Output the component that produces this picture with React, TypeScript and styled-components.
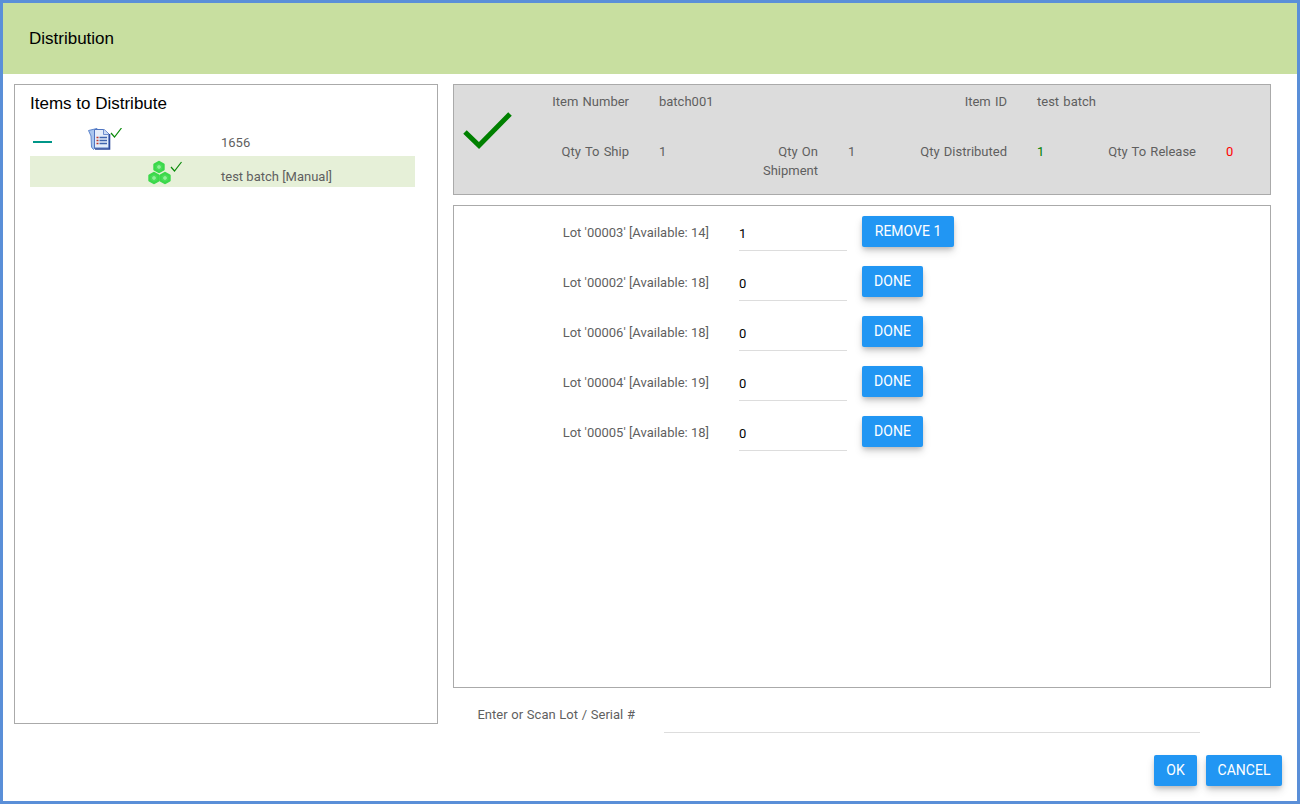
import styled, { createGlobalStyle } from "styled-components";

const GlobalStyle = createGlobalStyle`
  html, body {
    margin: 0;
    padding: 0;
    background: #fff;
  }
  * {
    box-sizing: border-box;
  }
`;

const Frame = styled.div`
  width: 1300px;
  height: 804px;
  border: 3px solid #5a8fd8;
  background: #fff;
  font-family: Roboto, "Liberation Sans", sans-serif;
  font-size: 13px;
  color: #5f5f5f;
  overflow: hidden;
`;

const Header = styled.div`
  height: 71px;
  background: #c8dfa0;
  display: flex;
  align-items: center;
  padding-left: 26px;
  font-family: "Liberation Sans", Arial, sans-serif;
  font-size: 17px;
  color: #000;
`;

const Main = styled.div`
  display: flex;
  gap: 15px;
  padding: 10px 0 0 11px;
  height: 659px;
`;

const TreePanel = styled.div`
  width: 424px;
  height: 640px;
  border: 1px solid #aaa;
  padding: 9px 22px 0 15px;
`;

const PanelTitle = styled.div`
  font-family: "Liberation Sans", Arial, sans-serif;
  font-size: 17px;
  line-height: 20px;
  color: #000;
`;

const TreeRows = styled.div`
  margin-top: 11px;
`;

const TreeRow = styled.div<{ $selected?: boolean; $indent: number }>`
  display: grid;
  grid-template-columns: ${({ $indent }) => $indent}px ${({ $indent }) => 191 - $indent}px 1fr;
  height: 31px;
  background: ${({ $selected }) => ($selected ? "#e6f0d8" : "transparent")};
`;

const Collapse = styled.div`
  width: 19px;
  height: 2px;
  margin: 16px 0 0 3px;
  background: #009688;
`;

const TreeIcon = styled.svg<{ $top: number }>`
  display: block;
  margin-top: ${({ $top }) => $top}px;
`;

const TreeText = styled.div<{ $top: number }>`
  padding-top: ${({ $top }) => $top}px;
  line-height: 14px;
  white-space: nowrap;
`;

const RightColumn = styled.div`
  width: 818px;
  display: flex;
  flex-direction: column;
  gap: 10px;
`;

const Summary = styled.div`
  height: 111px;
  background: #dcdcdc;
  border: 1px solid #aaa;
  padding-top: 7px;
  display: grid;
  grid-template-columns: 86px repeat(4, 90px 29px 70px);
  grid-template-rows: 50px auto;
  line-height: 19px;
  word-spacing: 1px;
`;

const BigCheck = styled.svg`
  grid-row: 1 / span 2;
  grid-column: 1;
  margin: 18px 0 0 8px;
`;

const Label = styled.div<{ $col: number }>`
  grid-column: ${({ $col }) => $col * 3 - 1};
  text-align: right;
  padding-right: 1px;
`;

const Value = styled.div<{ $col: number; $color?: string }>`
  grid-column: ${({ $col }) => $col * 3 + 1};
  color: ${({ $color }) => $color ?? "#5f5f5f"};
`;

const LotPanel = styled.div`
  height: 483px;
  border: 1px solid #aaa;
  padding-top: 10px;
  display: flex;
  flex-direction: column;
  gap: 19px;
`;

const LotRow = styled.div`
  display: flex;
  height: 31px;
`;

const LotLabel = styled.div`
  width: 255px;
  text-align: right;
  line-height: 33px;
  white-space: nowrap;
`;

const LotInput = styled.input`
  width: 108px;
  height: 35px;
  margin: 0 15px 0 30px;
  padding: 1px 0 0;
  border: 0;
  border-bottom: 1px solid #ddd;
  outline: none;
  background: transparent;
  font-family: Roboto, sans-serif;
  font-size: 13px;
  color: #000;
`;

const Button = styled.button<{ $width: number }>`
  width: ${({ $width }) => $width}px;
  height: 31px;
  padding: 0 0 2px;
  border: 0;
  border-radius: 2px;
  background: #2196f3;
  color: #fff;
  font-family: Roboto, sans-serif;
  font-size: 14px;
  white-space: nowrap;
  box-shadow: 0 3px 5px -1px rgba(0, 0, 0, 0.2), 0 5px 8px 0 rgba(0, 0, 0, 0.12);
`;

const ScanRow = styled.div`
  display: flex;
  height: 35px;
`;

const ScanLabel = styled.div`
  width: 182px;
  text-align: right;
  line-height: 33px;
  white-space: nowrap;
  word-spacing: 0.5px;
`;

const ScanInput = styled.input`
  width: 536px;
  height: 35px;
  margin-left: 29px;
  border: 0;
  border-bottom: 1px solid #ddd;
  outline: none;
  background: transparent;
`;

const Footer = styled.div`
  display: flex;
  justify-content: flex-end;
  gap: 9px;
  padding: 22px 15px 0 0;
`;

const lots = [
  { lot: "00003", available: 14, qty: "1", action: "REMOVE 1", width: 92 },
  { lot: "00002", available: 18, qty: "0", action: "DONE", width: 61 },
  { lot: "00006", available: 18, qty: "0", action: "DONE", width: 61 },
  { lot: "00004", available: 19, qty: "0", action: "DONE", width: 61 },
  { lot: "00005", available: 18, qty: "0", action: "DONE", width: 61 },
];

const SmallCheck = ({ x, y }: { x: number; y: number }) => (
  <path
    d={`M${x} ${y + 5}l3.500 4 7-9`}
    fill="none"
    stroke="#0a8a0a"
    strokeWidth="1.2"
  />
);

const ShipmentIcon = () => (
  <TreeIcon $top={3} width="36" height="24" viewBox="0 0 36 24">
    <path d="M0.500 2.500 9 0.500V18L5.500 21.500 3.500 19 3 8z" fill="#a9c6ee" stroke="#5f86cc" />
    <path d="M6.500 1.500H16L21 6V20H6.500z" fill="#e4edfa" stroke="#4f74c0" />
    <path d="M7 21H21.500V6" fill="none" stroke="#2c4a9c" strokeWidth="1.600" />
    <path d="M15.500 1.500V6.500H21" fill="#cddcf4" stroke="#6f8fd0" />
    <path d="M8.500 9.500h2M8.500 12.500h2M8.500 15.500h2" stroke="#c0392b" strokeWidth="1.400" />
    <path d="M11.500 9.500h7.500M11.500 12.500h7.500M11.500 15.500h7.500" stroke="#3f64ad" strokeWidth="1.400" />
    <SmallCheck x={23} y={0} />
  </TreeIcon>
);

const Hex = ({ x, y }: { x: number; y: number }) => (
  <g transform={`translate(${x} ${y})`}>
    <path
      d="M0-5 4.500-2.500v5L0 5-4.500 2.500v-5z"
      fill="#4be35a"
      stroke="#3bd84b"
      strokeWidth="2.400"
      strokeLinejoin="round"
    />
    <path d="M0-2.500 2.200-1.200v2.400L0 2.500-2.200 1.200v-2.400z" fill="#8ff297" stroke="#35c544" strokeWidth=".5" />
  </g>
);

const BatchIcon = () => (
  <TreeIcon $top={3} width="36" height="26" viewBox="0 0 36 26">
    <Hex x={11} y={8} />
    <Hex x={6} y={19} />
    <Hex x={17} y={19} />
    <SmallCheck x={23} y={3} />
  </TreeIcon>
);

export default function App() {
  return (
    <Frame>
      <GlobalStyle />
      <Header>Distribution</Header>
      <Main>
        <TreePanel>
          <PanelTitle>Items to Distribute</PanelTitle>
          <TreeRows>
            <TreeRow $indent={58}>
              <Collapse />
              <div>
                <ShipmentIcon />
              </div>
              <TreeText $top={11}>1656</TreeText>
            </TreeRow>
            <TreeRow $indent={118} $selected>
              <div />
              <div>
                <BatchIcon />
              </div>
              <TreeText $top={14}>test batch [Manual]</TreeText>
            </TreeRow>
          </TreeRows>
        </TreePanel>
        <RightColumn>
          <Summary>
            <BigCheck width="50" height="40" viewBox="0 0 50 40">
              <path d="M3 22 17 35.500 48 4" fill="none" stroke="#008000" strokeWidth="5" />
            </BigCheck>
            <Label $col={1}>Item Number</Label>
            <Value $col={1}>batch001</Value>
            <Label $col={3}>Item ID</Label>
            <Value $col={3}>test batch</Value>
            <Label $col={1}>Qty To Ship</Label>
            <Value $col={1}>1</Value>
            <Label $col={2}>Qty On Shipment</Label>
            <Value $col={2}>1</Value>
            <Label $col={3}>Qty Distributed</Label>
            <Value $col={3} $color="#008000">
              1
            </Value>
            <Label $col={4}>Qty To Release</Label>
            <Value $col={4} $color="#f00">
              0
            </Value>
          </Summary>
          <LotPanel>
            {lots.map((row) => (
              <LotRow key={row.lot}>
                <LotLabel>
                  Lot '{row.lot}' [Available: {row.available}]
                </LotLabel>
                <LotInput value={row.qty} readOnly />
                <Button $width={row.width}>{row.action}</Button>
              </LotRow>
            ))}
          </LotPanel>
          <ScanRow>
            <ScanLabel>Enter or Scan Lot / Serial #</ScanLabel>
            <ScanInput readOnly />
          </ScanRow>
        </RightColumn>
      </Main>
      <Footer>
        <Button $width={43}>OK</Button>
        <Button $width={76}>CANCEL</Button>
      </Footer>
    </Frame>
  );
}
